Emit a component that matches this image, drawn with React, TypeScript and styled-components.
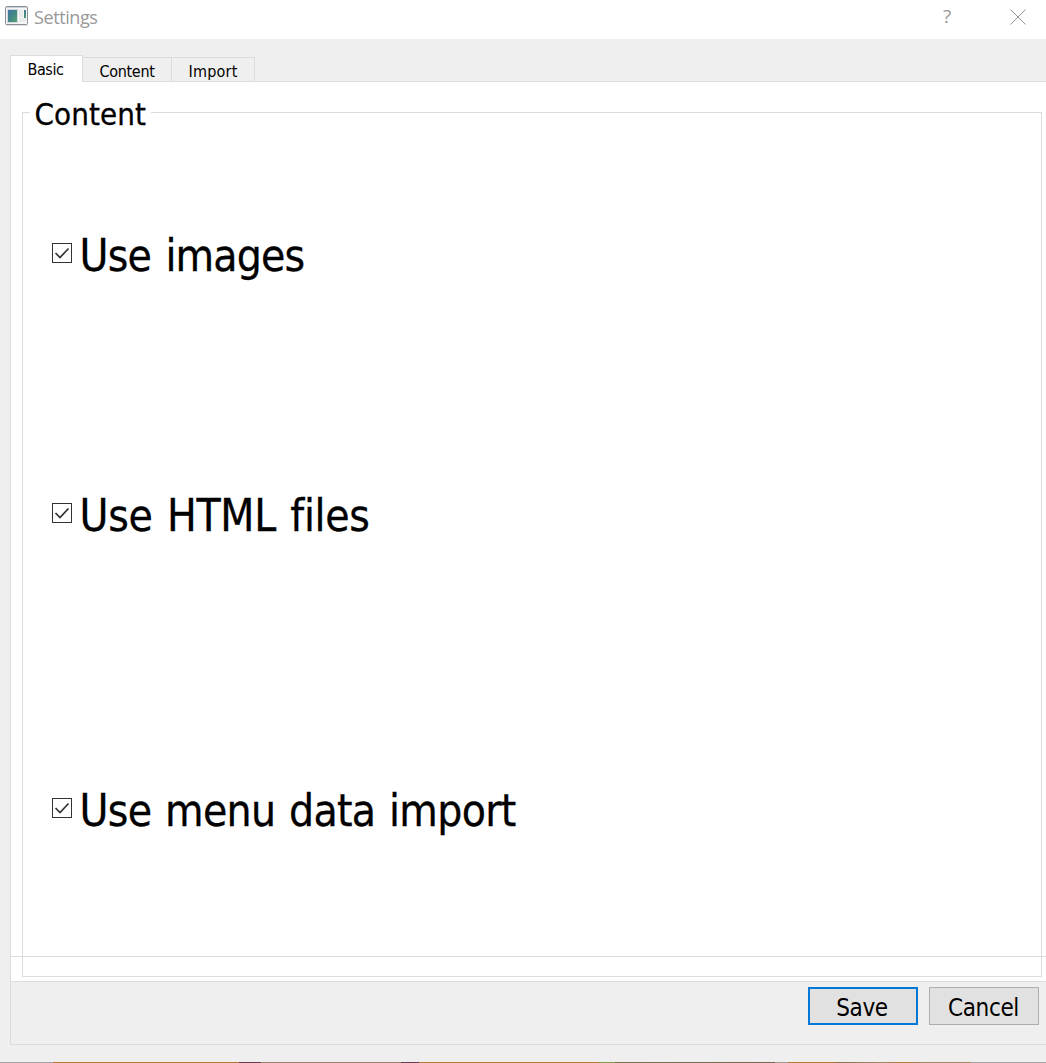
import React, { useState } from "react";
import styled, { createGlobalStyle } from "styled-components";

const UI_FONT = `"DejaVu Sans Condensed", "DejaVu Sans", sans-serif`;
const LINE = "#dcdcdc";

const GlobalStyle = createGlobalStyle`
  body { margin: 0; background: #efefef; overflow: hidden; }
  * { box-sizing: border-box; }
`;

const Window = styled.div`
  display: flex;
  flex-direction: column;
  width: 1046px;
  height: 1063px;
  background: #efefef;
  color: #000;
  font-family: ${UI_FONT};
  font-stretch: condensed;
`;

const TitleBar = styled.header`
  display: flex;
  align-items: flex-start;
  height: 39px;
  flex: none;
  padding: 6px 20px 0 5px;
  background: #fff;
`;

const Title = styled.span`
  flex: 1;
  margin: -2px 0 0 5px;
  font: 18px/26px "Open Sans", sans-serif;
  font-stretch: normal;
  letter-spacing: -0.4px;
  color: #999;
`;

const Help = styled.span`
  width: 10px;
  margin: -2px 57px 0 0;
  font: 19px/24px "Open Sans", sans-serif;
  color: #999;
`;

const CloseIcon = styled.svg`
  width: 16px;
  height: 16px;
  margin-top: 3px;
`;

const TabRow = styled.nav`
  display: flex;
  align-items: flex-end;
  flex: none;
  height: 43px;
  padding: 16px 0 0 10px;
`;

const Tab = styled.button<{ $active?: boolean; $width: number; $spacing: number }>`
  position: relative;
  z-index: ${(p) => (p.$active ? 1 : 0)};
  display: flex;
  justify-content: center;
  align-items: flex-start;
  width: ${(p) => p.$width}px;
  height: ${(p) => (p.$active ? 27 : 24)}px;
  margin: 0;
  padding: ${(p) => (p.$active ? "4px 2px 0 0" : "4px 0 0 0")};
  border: 1px solid ${LINE};
  border-left-width: ${(p) => (p.$active ? 1 : 0)}px;
  border-bottom: 0;
  margin-bottom: ${(p) => (p.$active ? 0 : 1)}px;
  background: ${(p) => (p.$active ? "#fff" : "#efefef")};
  font: 16px/19px ${UI_FONT};
  font-stretch: condensed;
  letter-spacing: ${(p) => p.$spacing}px;
  color: #000;
`;

const Frame = styled.main`
  display: flex;
  flex-direction: column;
  height: 964px;
  margin: -1px 0 0 10px;
  border: 1px solid ${LINE};
  border-right: 0;
`;

const Pane = styled.section`
  position: relative;
  flex: none;
  height: 900px;
  padding: 12px 4px 0 11px;
  background: #fff;
  border-bottom: 1px solid ${LINE};
`;

const PaneRule = styled.div`
  position: absolute;
  left: 0;
  right: 0;
  top: 874px;
  height: 1px;
  background: ${LINE};
`;

const Group = styled.fieldset`
  display: flex;
  flex-direction: column;
  height: 883px;
  min-width: 0;
  margin: 0;
  padding: 0 0 0 29px;
  border: 1px solid ${LINE};
`;

const Legend = styled.legend`
  width: 121px;
  height: 37px;
  margin-left: -22px;
  padding: 0 0 0 4.5px;
  font-size: 31px;
  line-height: 40px;
  letter-spacing: 0.1px;
  white-space: nowrap;
  -webkit-text-stroke: 0.3px #000;
`;

const Option = styled.label<{ $before: number }>`
  display: flex;
  align-items: center;
  height: 60px;
  margin-top: ${(p) => p.$before}px;
`;

const Box = styled.svg`
  flex: none;
  width: 20px;
  height: 20px;
`;

const OptionText = styled.span<{ $spacing: number; $wordGap: number }>`
  margin: 5px 0 0 7.5px;
  font-size: 44px;
  line-height: 60px;
  letter-spacing: ${(p) => p.$spacing}px;
  word-spacing: ${(p) => p.$wordGap}px;
  white-space: nowrap;
  -webkit-text-stroke: 0.3px #000;
`;

const Footer = styled.footer`
  display: flex;
  justify-content: flex-end;
  gap: 11px;
  padding: 5px 7px 0 0;
`;

const Button = styled.button<{ $primary?: boolean }>`
  width: 110px;
  height: 38px;
  padding: ${(p) => (p.$primary ? "3px 2px 0 0" : "3px 1px 0 0")};
  border: ${(p) => (p.$primary ? "2px solid #0078d7" : "1px solid #adadad")};
  background: #e1e1e1;
  color: #000;
  font: 24px/30px ${UI_FONT};
  font-stretch: condensed;
  letter-spacing: -0.4px;
`;

const DesktopEdge = styled.div`
  height: 1px;
  margin-top: auto;
  background: linear-gradient(
    to right,
    #a3a3a3 0 53px, #b87830 53px 239px, #703950 239px 261px,
    #9b8269 261px 401px, #703950 401px 419px, #b87830 419px 599px,
    #879b43 599px 615px, #737743 615px, #776454 775px,
    #a39a90 775px 788px, #b87830 788px 832px, #91714a 840px,
    #a18960 880px, #b87830 905px, #a18960 925px 971px, #a3a3a3 971px
  );
`;

const AppIcon = () => (
  <svg width="24" height="20" viewBox="0 0 24 20">
    <defs>
      <linearGradient id="panel" x1="0" y1="0" x2="1" y2="1">
        <stop offset="0" stopColor="#456fa4" />
        <stop offset="0.45" stopColor="#40858a" />
        <stop offset="1" stopColor="#55aa70" />
      </linearGradient>
    </defs>
    <rect x="0.5" y="0.5" width="22" height="18" rx="1" fill="#f5f5f5" stroke="#899097" />
    <path d="M1 1.5h21" stroke="#c8d0d7" />
    <rect x="2.5" y="3.5" width="10" height="13" fill="url(#panel)" stroke="#d4d8dc" />
    <rect x="14" y="4" width="4" height="7" fill="#e8eaeb" />
    <rect x="14" y="12" width="7" height="4" fill="#e8eaeb" />
    <rect x="19" y="4" width="2" height="8" fill="url(#panel)" />
    <path d="M1 19.5h22" stroke="#ddd" />
  </svg>
);

const options = [
  { label: "Use images", before: 92, spacing: -0.85, wordGap: 2.8 },
  { label: "Use HTML files", before: 200, spacing: -0.3, wordGap: 2.1 },
  { label: "Use menu data import", before: 235, spacing: -0.7, wordGap: 1.8 },
];

export default function App() {
  const [checked, setChecked] = useState([true, true, true]);
  return (
    <Window>
      <GlobalStyle />
      <TitleBar>
        <AppIcon />
        <Title>Settings</Title>
        <Help>?</Help>
        <CloseIcon viewBox="0 0 16 16">
          <path d="M.5.5l15 15M15.5.5l-15 15" stroke="#929292" fill="none" />
        </CloseIcon>
      </TitleBar>
      <TabRow>
        <Tab $active $width={73} $spacing={-0.4}>Basic</Tab>
        <Tab $width={89} $spacing={-0.3}>Content</Tab>
        <Tab $width={83} $spacing={0.2}>Import</Tab>
      </TabRow>
      <Frame>
        <Pane>
          <Group>
            <Legend>Content</Legend>
            {options.map((o, i) => (
              <Option
                key={o.label}
                $before={o.before}
                onClick={() => setChecked(checked.map((c, j) => (j === i ? !c : c)))}
              >
                <Box viewBox="0 0 20 20">
                  <rect x="0.5" y="0.5" width="19" height="19" fill="#fff" stroke="#333" />
                  {checked[i] && (
                    <path d="M3.5 10l4.5 4.5L16.5 5.5" fill="none" stroke="#333" strokeWidth="1.7" />
                  )}
                </Box>
                <OptionText $spacing={o.spacing} $wordGap={o.wordGap}>{o.label}</OptionText>
              </Option>
            ))}
          </Group>
          <PaneRule />
        </Pane>
        <Footer>
          <Button $primary>Save</Button>
          <Button>Cancel</Button>
        </Footer>
      </Frame>
      <DesktopEdge />
    </Window>
  );
}
